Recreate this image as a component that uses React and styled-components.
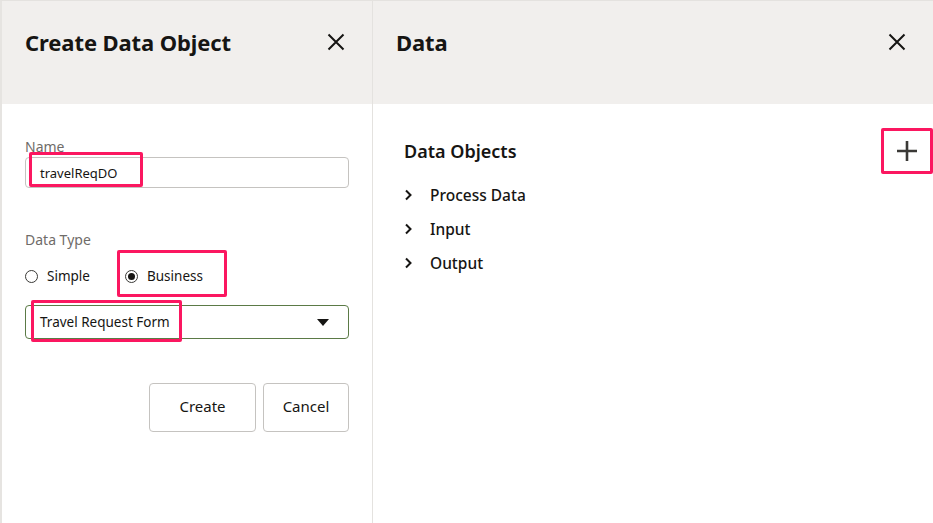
import React from 'react'
import styled, { createGlobalStyle } from 'styled-components'

const GlobalStyle = createGlobalStyle`
  html, body {
    margin: 0;
    padding: 0;
    background: #ffffff;
  }
  body {
    font-family: 'Noto Sans', 'Open Sans', sans-serif;
    color: #161513;
  }
`

const MARK = '#fb1760'

const Page = styled.div`
  display: flex;
  width: 933px;
  height: 523px;
  box-sizing: border-box;
  border-top: 1px solid #e4e2df;
  border-left: 2px solid #e6e4e1;
  overflow: hidden;
`

const Panel = styled.section`
  display: flex;
  flex-direction: column;
  width: ${(p) => p.width};
  flex: ${(p) => (p.grow ? '1' : 'none')};
  border-right: ${(p) => (p.divider ? '1px solid #e4e2df' : 'none')};
`

const Header = styled.header`
  height: 103px;
  flex: none;
  background: #f1efed;
  display: flex;
  align-items: center;
  justify-content: space-between;
  padding: 0 ${(p) => p.right}px 21px ${(p) => p.left}px;
  box-sizing: border-box;
`

const Title = styled.h1`
  margin: 0;
  font-size: 22px;
  font-weight: 700;
  letter-spacing: -0.1px;
  color: #161513;
`

const CloseBtn = styled.button`
  border: 0;
  background: transparent;
  padding: 0;
  width: 20px;
  height: 20px;
  display: flex;
  align-items: center;
  justify-content: center;
  cursor: pointer;
  svg {
    display: block;
  }
`

const Body = styled.div`
  flex: 1;
  padding: ${(p) => p.pad};
`

const Label = styled.div`
  font-size: 14px;
  line-height: 18px;
  color: #6f6c69;
  margin-top: ${(p) => p.top || 0}px;
`

const Field = styled.div`
  position: relative;
  margin-top: ${(p) => p.top || 0}px;
`

const TextInput = styled.div`
  height: 31px;
  box-sizing: border-box;
  border: 1px solid #c5c3c0;
  border-radius: 4px;
  display: flex;
  align-items: center;
  padding-left: 14px;
  font-size: 13px;
  color: #161513;
  margin-top: 1px;
`

const Mark = styled.div`
  position: absolute;
  left: ${(p) => p.x}px;
  top: ${(p) => p.y}px;
  width: ${(p) => p.w}px;
  height: ${(p) => p.h}px;
  border: 3px solid ${MARK};
  border-radius: 2px;
  box-sizing: border-box;
  pointer-events: none;
`

const RadioRow = styled.div`
  position: relative;
  display: flex;
  align-items: center;
  height: 20px;
  margin-top: 17px;
`

const Radio = styled.label`
  display: flex;
  align-items: center;
  gap: 9px;
  font-size: 13.5px;
  color: #161513;
  width: ${(p) => (p.width ? `${p.width}px` : 'auto')};
`

const RadioDot = styled.span`
  width: 13px;
  height: 13px;
  box-sizing: border-box;
  border: 1px solid #3a3936;
  border-radius: 50%;
  display: flex;
  align-items: center;
  justify-content: center;
  &::after {
    content: '';
    display: ${(p) => (p.checked ? 'block' : 'none')};
    width: 7px;
    height: 7px;
    border-radius: 50%;
    background: #161513;
  }
`

const Select = styled.div`
  height: 34px;
  box-sizing: border-box;
  border: 1px solid #5b7a46;
  border-radius: 4px;
  display: flex;
  align-items: center;
  justify-content: space-between;
  padding: 0 19px 0 14px;
  font-size: 13.5px;
  color: #161513;
`

const Caret = styled.span`
  width: 0;
  height: 0;
  border-left: 6px solid transparent;
  border-right: 6px solid transparent;
  border-top: 7px solid #161513;
`

const Actions = styled.div`
  display: flex;
  justify-content: flex-end;
  gap: 7px;
  margin-top: 44px;
`

const Button = styled.button`
  height: 49px;
  width: ${(p) => p.width}px;
  border: 1px solid #c5c3c0;
  border-radius: 4px;
  background: #ffffff;
  font-family: inherit;
  font-size: 15px;
  line-height: 18px;
  padding: 0 0 3px;
  color: #161513;
  cursor: pointer;
`

const SectionHead = styled.div`
  display: flex;
  align-items: center;
  justify-content: space-between;
  height: 46px;
`

const SectionTitle = styled.h2`
  margin: 0;
  font-size: 18px;
  font-weight: 600;
  color: #161513;
`

const AddBtn = styled.button`
  position: relative;
  width: 52px;
  height: 46px;
  border: 0;
  background: transparent;
  padding: 0;
  display: flex;
  align-items: center;
  justify-content: center;
  cursor: pointer;
`

const Tree = styled.ul`
  list-style: none;
  margin: 4px 0 0;
  padding: 0;
`

const TreeItem = styled.li`
  display: flex;
  align-items: center;
  height: 34px;
  gap: 17px;
  font-size: 15.5px;
  font-weight: 500;
  color: #161513;
  svg {
    flex: none;
  }
`

const CloseIcon = () => (
  <svg width="18" height="18" viewBox="0 0 18 18">
    <path d="M1.5 1.5 L16.5 16.5 M16.5 1.5 L1.5 16.5" stroke="#161513" strokeWidth="2" />
  </svg>
)

const Chevron = () => (
  <svg width="9" height="12" viewBox="0 0 9 12">
    <path d="M2 1.5 L6.5 6 L2 10.5" fill="none" stroke="#161513" strokeWidth="2" />
  </svg>
)

const CreatePanel = () => (
  <Panel width="370px" divider>
    <Header left={23} right={26}>
      <Title>Create Data Object</Title>
      <CloseBtn aria-label="Close">
        <CloseIcon />
      </CloseBtn>
    </Header>
    <Body pad="34px 23px 0 23px">
      <Label>Name</Label>
      <Field>
        <TextInput>travelReqDO</TextInput>
        <Mark x={4} y={-5} w={114} h={35} />
      </Field>

      <Label top={43}>Data Type</Label>
      <RadioRow>
        <Radio width={100}>
          <RadioDot />
          Simple
        </Radio>
        <Radio>
          <RadioDot checked />
          Business
        </Radio>
        <Mark x={92} y={-16} w={110} h={47} />
      </RadioRow>

      <Field top={19}>
        <Select>
          <span>Travel Request Form</span>
          <Caret />
        </Select>
        <Mark x={6} y={-5} w={151} h={42} />
      </Field>

      <Actions>
        <Button width={107}>Create</Button>
        <Button width={86}>Cancel</Button>
      </Actions>
    </Body>
  </Panel>
)

const DataPanel = () => (
  <Panel grow>
    <Header left={23} right={26}>
      <Title>Data</Title>
      <CloseBtn aria-label="Close">
        <CloseIcon />
      </CloseBtn>
    </Header>
    <Body pad="24px 0 0 31px">
      <SectionHead>
        <SectionTitle>Data Objects</SectionTitle>
        <AddBtn aria-label="Add">
          <svg width="22" height="22" viewBox="0 0 22 22">
            <path d="M11 1 V21 M1 11 H21" stroke="#3a3936" strokeWidth="2.6" />
          </svg>
          <Mark x={0} y={0} w={52} h={46} />
        </AddBtn>
      </SectionHead>
      <Tree>
        {['Process Data', 'Input', 'Output'].map((name) => (
          <TreeItem key={name}>
            <Chevron />
            {name}
          </TreeItem>
        ))}
      </Tree>
    </Body>
  </Panel>
)

const App = () => (
  <>
    <GlobalStyle />
    <Page>
      <CreatePanel />
      <DataPanel />
    </Page>
  </>
)

export default App
